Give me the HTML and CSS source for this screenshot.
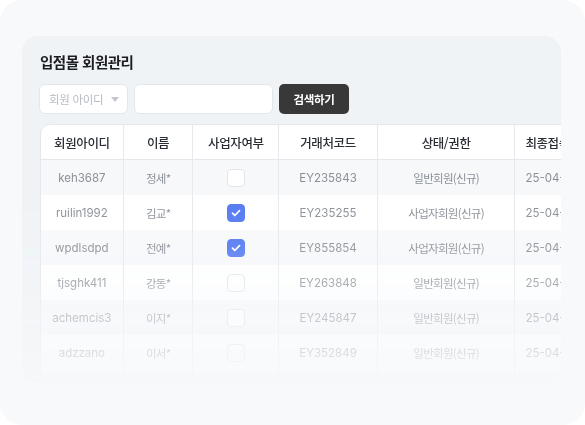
FILE: index.html
```html
<!DOCTYPE html>
<html lang="ko">
<head>
<meta charset="utf-8">
<title>입점몰 회원관리</title>
<link rel="stylesheet" href="styles.css">
</head>
<body>
<div class="screen">
  <section class="panel">
    <h1 class="title">입점몰 회원관리</h1>
    <div class="search">
      <div class="select">
        <span>회원 아이디</span>
        <svg class="caret" width="8" height="5" viewBox="0 0 8 5"><path d="M0 0h8L4 5z" fill="#c3c7cd"/></svg>
      </div>
      <div class="input"></div>
      <button class="btn">검색하기</button>
    </div>
    <div class="table">
      <div class="row head">
        <div class="c c1">회원아이디</div>
        <div class="c c2">이름</div>
        <div class="c c3">사업자여부</div>
        <div class="c c4">거래처코드</div>
        <div class="c c5">상태/권한</div>
        <div class="c c6">최종접속일시</div>
      </div>
      <div class="row odd">
        <div class="c c1 en">keh3687</div>
        <div class="c c2 ko">정세*</div>
        <div class="c c3"><span class="box"></span></div>
        <div class="c c4 en">EY235843</div>
        <div class="c c5 ko">일반회원(신규)</div>
        <div class="c c6 en">25-04-21 14:32</div>
      </div>
      <div class="row">
        <div class="c c1 en">ruilin1992</div>
        <div class="c c2 ko">김교*</div>
        <div class="c c3"><span class="box on"><svg width="10" height="8" viewBox="0 0 10 8"><path d="M1.5 4.2l2.3 2.3L8.5 1.6" fill="none" stroke="#fff" stroke-width="1.7" stroke-linecap="round" stroke-linejoin="round"/></svg></span></div>
        <div class="c c4 en">EY235255</div>
        <div class="c c5 ko">사업자회원(신규)</div>
        <div class="c c6 en">25-04-20 09:15</div>
      </div>
      <div class="row odd">
        <div class="c c1 en">wpdlsdpd</div>
        <div class="c c2 ko">전예*</div>
        <div class="c c3"><span class="box on"><svg width="10" height="8" viewBox="0 0 10 8"><path d="M1.5 4.2l2.3 2.3L8.5 1.6" fill="none" stroke="#fff" stroke-width="1.7" stroke-linecap="round" stroke-linejoin="round"/></svg></span></div>
        <div class="c c4 en">EY855854</div>
        <div class="c c5 ko">사업자회원(신규)</div>
        <div class="c c6 en">25-04-19 17:48</div>
      </div>
      <div class="row">
        <div class="c c1 en">tjsghk411</div>
        <div class="c c2 ko">강동*</div>
        <div class="c c3"><span class="box"></span></div>
        <div class="c c4 en">EY263848</div>
        <div class="c c5 ko">일반회원(신규)</div>
        <div class="c c6 en">25-04-18 11:02</div>
      </div>
      <div class="row odd">
        <div class="c c1 en">achemcis3</div>
        <div class="c c2 ko">이지*</div>
        <div class="c c3"><span class="box"></span></div>
        <div class="c c4 en">EY245847</div>
        <div class="c c5 ko">일반회원(신규)</div>
        <div class="c c6 en">25-04-17 16:27</div>
      </div>
      <div class="row">
        <div class="c c1 en">adzzano</div>
        <div class="c c2 ko">이서*</div>
        <div class="c c3"><span class="box"></span></div>
        <div class="c c4 en">EY352849</div>
        <div class="c c5 ko">일반회원(신규)</div>
        <div class="c c6 en">25-04-16 08:51</div>
      </div>
      <div class="row odd">
        <div class="c c1"></div>
        <div class="c c2"></div>
        <div class="c c3"></div>
        <div class="c c4"></div>
        <div class="c c5"></div>
        <div class="c c6"></div>
      </div>
    </div>
  </section>
</div>
</body>
</html>
```

FILE: styles.css
```css
* { box-sizing: border-box; }

html, body {
  margin: 0;
  background: #ffffff;
}

body {
  font-family: Inter, "Noto Sans CJK KR", sans-serif;
  color: #22262c;
}

.screen {
  width: 585px;
  height: 425px;
  background: #f7f9fb;
  border-radius: 22px;
  padding: 36px 24px 0 22px;
  overflow: hidden;
}

/* main card; the lower rows fade out into the page */
.panel {
  height: 347px;
  background: #eff3f6;
  border-radius: 16px;
  padding: 16px 0 0 18px;
  overflow: hidden;
  -webkit-mask-image: linear-gradient(to bottom, #000 0, #000 150px, rgba(0,0,0,0.9) 210px, rgba(0,0,0,0.73) 246px, rgba(0,0,0,0.48) 281px, rgba(0,0,0,0.27) 316px, rgba(0,0,0,0.08) 347px);
  mask-image: linear-gradient(to bottom, #000 0, #000 150px, rgba(0,0,0,0.9) 210px, rgba(0,0,0,0.73) 246px, rgba(0,0,0,0.48) 281px, rgba(0,0,0,0.27) 316px, rgba(0,0,0,0.08) 347px);
}

.title {
  margin: 0;
  font-family: "Noto Sans CJK KR", sans-serif;
  font-size: 14.5px;
  line-height: 20px;
  font-weight: 700;
  color: #1b1d21;
  letter-spacing: -0.5px;
}

.search {
  display: flex;
  gap: 6px;
  margin-top: 12px;
  height: 30px;
}

.select, .input {
  height: 30px;
  background: #fff;
  border: 1px solid #e3e7eb;
  border-radius: 6px;
}

.select {
  width: 89px;
  margin-left: -1px;
  display: flex;
  align-items: center;
  justify-content: space-between;
  padding: 0 8px 0 9px;
  font-family: "Noto Sans CJK KR", sans-serif;
  font-size: 11.5px;
  color: #b6bbc2;
  letter-spacing: -0.3px;
}

.input { width: 139px; }

.btn {
  width: 70px;
  height: 30px;
  border: 0;
  border-radius: 5px;
  background: #383838;
  color: #fff;
  font-family: "Noto Sans CJK KR", sans-serif;
  font-size: 11.5px;
  font-weight: 700;
  letter-spacing: -0.3px;
  padding: 0;
}

.table {
  margin-top: 10px;
  width: 600px;
  background: #fff;
  border: 1px solid #e4e8ec;
  border-radius: 10px 0 0 0;
}

.row {
  display: flex;
  height: 35px;
}

.row.head { height: 35px; border-bottom: 1px solid #e4e8ec; }
.row.odd { background: #f7f8fa; }

.c {
  display: flex;
  align-items: center;
  justify-content: center;
  border-right: 1px solid #e6e9ed;
  white-space: nowrap;
  overflow: hidden;
}

.c1 { width: 83px; }
.c2 { width: 70px; }
.c3 { width: 86px; }
.c4 { width: 99px; }
.c5 { width: 138px; }
.c6 { width: 124px; justify-content: flex-start; padding-left: 10px; border-right: 0; }

.head .c {
  font-family: "Noto Sans CJK KR", sans-serif;
  font-size: 12.5px;
  font-weight: 500;
  color: #2a2e34;
  letter-spacing: -0.4px;
}

.en {
  font-size: 11.5px;
  color: #8b9098;
}

.ko {
  font-family: "Noto Sans CJK KR", sans-serif;
  font-size: 11.5px;
  color: #8b9098;
  letter-spacing: -0.7px;
}

.box {
  width: 18px;
  height: 18px;
  border: 1px solid #e2e5e9;
  border-radius: 4px;
  background: #fff;
  display: flex;
  align-items: center;
  justify-content: center;
}

.box.on {
  background: #5479f1;
  border-color: #5479f1;
}
```
